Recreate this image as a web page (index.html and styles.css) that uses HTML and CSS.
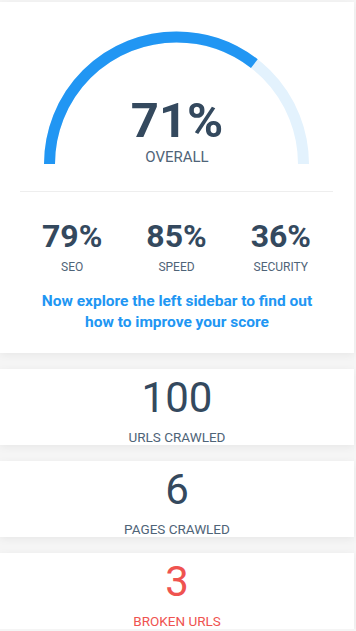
FILE: index.html
```html
<!DOCTYPE html>
<html lang="en">
<head>
<meta charset="utf-8">
<title>Score</title>
<link rel="stylesheet" href="styles.css">
</head>
<body>
<div class="page">
  <section class="card score-card">
    <div class="gauge">
      <svg class="gauge-svg" width="354" height="170" viewBox="0 0 354 170">
        <path d="M 49.5 162 A 127 127 0 0 1 303.5 162" fill="none" stroke="#e3f2fd" stroke-width="11"/>
        <path d="M 49.5 162 A 127 127 0 0 1 303.5 162" fill="none" stroke="#2196f3" stroke-width="11" pathLength="100" stroke-dasharray="71 100"/>
      </svg>
      <div class="gauge-text">
        <div class="overall-value">71%</div>
        <div class="overall-label">OVERALL</div>
      </div>
    </div>
    <div class="divider"></div>
    <div class="subscores">
      <div class="subscore">
        <div class="sub-value">79%</div>
        <div class="sub-label">SEO</div>
      </div>
      <div class="subscore">
        <div class="sub-value">85%</div>
        <div class="sub-label">SPEED</div>
      </div>
      <div class="subscore">
        <div class="sub-value">36%</div>
        <div class="sub-label">SECURITY</div>
      </div>
    </div>
    <p class="hint">Now explore the left sidebar to find out<br>how to improve your score</p>
  </section>
  <section class="card stat-card">
    <div class="stat-value">100</div>
    <div class="stat-label">URLS CRAWLED</div>
  </section>
  <section class="card stat-card">
    <div class="stat-value">6</div>
    <div class="stat-label">PAGES CRAWLED</div>
  </section>
  <section class="card stat-card danger">
    <div class="stat-value">3</div>
    <div class="stat-label">BROKEN URLS</div>
  </section>
</div>
</body>
</html>
```

FILE: styles.css
```css
html, body {
  margin: 0;
  padding: 0;
}
body {
  background: #f5f5f5;
  font-family: Roboto, "Liberation Sans", Arial, sans-serif;
  color: #34495e;
}
.page {
  width: 354px;
  padding-top: 2px;
  display: flex;
  flex-direction: column;
  gap: 16px;
}
.card {
  background: #ffffff;
  box-shadow: 0 2px 8px rgba(0, 0, 0, 0.06);
}
.score-card {
  height: 351px;
  box-sizing: border-box;
}
.gauge {
  position: relative;
  height: 170px;
}
.gauge-svg {
  display: block;
}
.gauge-text {
  position: absolute;
  left: 0;
  right: 0;
  top: 94px;
  text-align: center;
}
.overall-value {
  font-size: 49px;
  line-height: 1;
  font-weight: 700;
  color: #34495e;
}
.overall-label {
  margin-top: 5px;
  font-size: 15px;
  line-height: 1;
  color: #4f6478;
}
.divider {
  height: 1px;
  background: #eeeeee;
  margin: 19px 21px 0 20px;
}
.subscores {
  display: grid;
  grid-template-columns: 1fr 1fr 1fr;
  margin: 0 21px 0 20px;
  padding-top: 28px;
  text-align: center;
}
.sub-value {
  font-size: 32px;
  line-height: 1;
  font-weight: 700;
  color: #34495e;
}
.sub-label {
  margin-top: 9px;
  font-size: 12px;
  line-height: 1;
  color: #4f6478;
}
.hint {
  margin: 18px 0 0;
  font-size: 15.5px;
  line-height: 21px;
  font-weight: 700;
  color: #2196f3;
  text-align: center;
}
.stat-card {
  height: 76px;
  box-sizing: border-box;
  padding-top: 8px;
  text-align: center;
}
.stat-value {
  font-size: 42px;
  line-height: 1;
  font-weight: 400;
  color: #34495e;
}
.stat-label {
  margin-top: 12px;
  font-size: 13.5px;
  line-height: 1;
  color: #4f6478;
}
.danger .stat-value,
.danger .stat-label {
  color: #ef5350;
}
```
